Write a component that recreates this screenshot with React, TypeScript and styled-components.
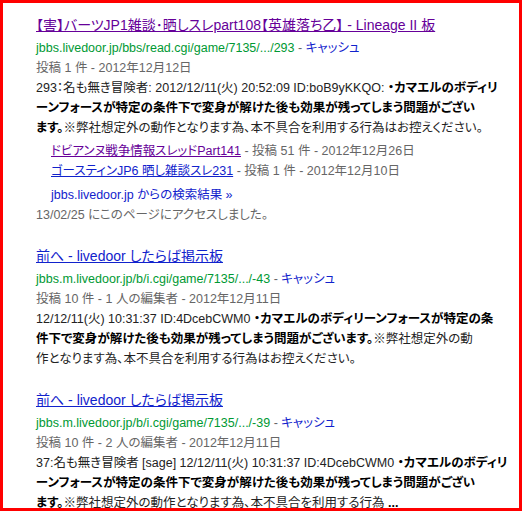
import React from 'react';
import styled, { createGlobalStyle } from 'styled-components';

const GlobalStyle = createGlobalStyle`
  html, body {
    margin: 0;
    padding: 0;
    background: #fff;
  }
  body {
    font-family: "Liberation Sans", "Noto Sans CJK JP", sans-serif;
    font-feature-settings: "palt";
  }
`;

const Frame = styled.div`
  box-sizing: border-box;
  width: 522px;
  height: 511px;
  border: 3px solid #f00;
  padding: 11px 0 0 33px;
  overflow: hidden;
`;

const Result = styled.div`
  margin-bottom: 20px;
`;

const Title = styled.a<{ $visited?: boolean }>`
  display: block;
  font-size: 14px;
  line-height: 22px;
  color: ${(p) => (p.$visited ? '#660099' : '#1122cc')};
  text-decoration: underline;
  white-space: nowrap;
`;

const Cite = styled.div`
  margin-top: 2px;
  font-size: 12.5px;
  line-height: 20px;
  color: #009933;
  white-space: nowrap;
`;

const Cache = styled.a`
  color: #1122cc;
  text-decoration: none;
`;

const Sep = styled.span`
  color: #666;
`;

const Meta = styled.div`
  font-size: 12.5px;
  line-height: 20px;
  color: #666;
  white-space: nowrap;
`;

const Snippet = styled.div`
  font-size: 12.5px;
  line-height: 20px;
  color: #222;
`;

const Line = styled.div`
  white-space: nowrap;
`;

const Em = styled.b`
  color: #000;
  font-weight: bold;
`;

const SubList = styled.ul`
  list-style: none;
  margin: 3px 0 0;
  padding: 0 0 0 15px;
  font-size: 12.5px;
  line-height: 20px;
`;

const SubItem = styled.li`
  color: #666;
  white-space: nowrap;
`;

const SubLink = styled.a<{ $visited?: boolean }>`
  color: ${(p) => (p.$visited ? '#660099' : '#1122cc')};
  text-decoration: underline;
`;

const MoreLink = styled.a`
  display: block;
  margin: 4px 0 0 15px;
  font-size: 12.5px;
  line-height: 20px;
  color: #1122cc;
  text-decoration: none;
`;

const Visited = styled.div`
  margin-bottom: 5px;
  font-size: 12.5px;
  line-height: 20px;
  color: #666;
`;

type Part = { t: string; b?: boolean };

type ResultData = {
  title: string;
  visited?: boolean;
  url: string;
  meta: string;
  lines: Part[][];
};

const results: ResultData[] = [
  {
    title: '【害】バーツJP1雑談･晒しスレpart108【英雄落ち乙】 - Lineage II 板',
    visited: true,
    url: 'jbbs.livedoor.jp/bbs/read.cgi/game/7135/.../293',
    meta: '投稿 1 件 - 2012年12月12日',
    lines: [
      [{ t: '293：名も無き冒険者: 2012/12/11(火) 20:52:09 ID:boB9yKKQO: ' }, { t: '・カマエルのボディリ', b: true }],
      [{ t: 'ーンフォースが特定の条件下で変身が解けた後も効果が残ってしまう問題がござい', b: true }],
      [{ t: 'ます。', b: true }, { t: '※弊社想定外の動作となります為、本不具合を利用する行為はお控えください。' }],
    ],
  },
  {
    title: '前へ - livedoor したらば掲示板',
    url: 'jbbs.m.livedoor.jp/b/i.cgi/game/7135/.../-43',
    meta: '投稿 10 件 - 1 人の編集者 - 2012年12月11日',
    lines: [
      [{ t: '12/12/11(火) 10:31:37 ID:4DcebCWM0 ' }, { t: '・カマエルのボディリーンフォースが特定の条', b: true }],
      [{ t: '件下で変身が解けた後も効果が残ってしまう問題がございます。', b: true }, { t: '※弊社想定外の動' }],
      [{ t: '作となります為、本不具合を利用する行為はお控えください。' }],
    ],
  },
  {
    title: '前へ - livedoor したらば掲示板',
    url: 'jbbs.m.livedoor.jp/b/i.cgi/game/7135/.../-39',
    meta: '投稿 10 件 - 2 人の編集者 - 2012年12月11日',
    lines: [
      [{ t: '37:名も無き冒険者 [sage] 12/12/11(火) 10:31:37 ID:4DcebCWM0 ' }, { t: '・カマエルのボディリ', b: true }],
      [{ t: 'ーンフォースが特定の条件下で変身が解けた後も効果が残ってしまう問題がござい', b: true }],
      [{ t: 'ます。', b: true }, { t: '※弊社想定外の動作となります為、本不具合を利用する行為 ' }, { t: '...', b: true }],
    ],
  },
];

const subResults = [
  { title: 'ドビアンヌ戦争情報スレッドPart141', visited: true, meta: ' - 投稿 51 件 - 2012年12月26日' },
  { title: 'ゴースティンJP6 晒し雑談スレ231', meta: ' - 投稿 1 件 - 2012年12月10日' },
];

const App = () => {
  return (
    <>
      <GlobalStyle />
      <Frame>
        {results.map((r, i) => (
          <Result key={i}>
            <Title href="#" $visited={r.visited}>{r.title}</Title>
            <Cite>
              {r.url}
              <Sep> - </Sep>
              <Cache href="#">キャッシュ</Cache>
            </Cite>
            <Meta>{r.meta}</Meta>
            <Snippet>
              {r.lines.map((line, j) => (
                <Line key={j}>
                  {line.map((p, k) => (p.b ? <Em key={k}>{p.t}</Em> : <span key={k}>{p.t}</span>))}
                </Line>
              ))}
            </Snippet>
            {i === 0 && (
              <>
                <SubList>
                  {subResults.map((s, j) => (
                    <SubItem key={j}>
                      <SubLink href="#" $visited={s.visited}>{s.title}</SubLink>
                      {s.meta}
                    </SubItem>
                  ))}
                </SubList>
                <MoreLink href="#">jbbs.livedoor.jp からの検索結果 »</MoreLink>
                <Visited>13/02/25 にこのページにアクセスしました。</Visited>
              </>
            )}
          </Result>
        ))}
      </Frame>
    </>
  );
};

export default App;
